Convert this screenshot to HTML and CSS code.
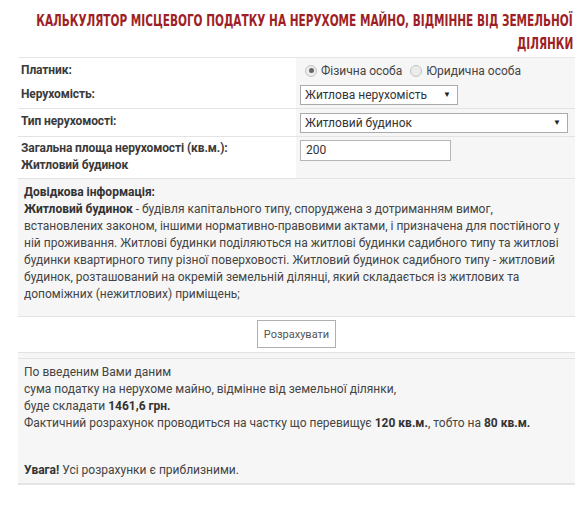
FILE: index.html
```html
<!DOCTYPE html>
<html lang="uk">
<head>
<meta charset="utf-8">
<title>Калькулятор</title>
<link rel="stylesheet" href="styles.css">
</head>
<body>
<div class="wrap">
  <h1 class="title"><span class="tl">КАЛЬКУЛЯТОР МІСЦЕВОГО ПОДАТКУ НА НЕРУХОМЕ МАЙНО, ВІДМІННЕ ВІД ЗЕМЕЛЬНОЇ</span><span class="tl">ДІЛЯНКИ</span></h1>
  <div class="form">
    <div class="row r1">
      <div class="lbl">Платник:</div>
      <div class="val">
        <span class="radio on"></span><span class="rtext">Фізична особа</span>
        <span class="radio"></span><span class="rtext">Юридична особа</span>
      </div>
    </div>
    <div class="row r2">
      <div class="lbl">Нерухомість:</div>
      <div class="val"><div class="sel short">Житлова нерухомість<span class="arr">▼</span></div></div>
    </div>
    <div class="row r3">
      <div class="lbl">Тип нерухомості:</div>
      <div class="val"><div class="sel long">Житловий будинок<span class="arr">▼</span></div></div>
    </div>
    <div class="row r4">
      <div class="lbl">Загальна площа нерухомості (кв.м.):<br>Житловий будинок</div>
      <div class="val"><div class="inp">200</div></div>
    </div>
  </div>
  <div class="info">
    <b>Довідкова інформація:</b><br>
    <b>Житловий будинок</b> - будівля капітального типу, споруджена з дотриманням вимог,<br>
    встановлених законом, іншими нормативно-правовими актами, і призначена для постійного у<br>
    ній проживання. Житлові будинки поділяються на житлові будинки садибного типу та житлові<br>
    будинки квартирного типу різної поверховості. Житловий будинок садибного типу - житловий<br>
    будинок, розташований на окремій земельній ділянці, який складається із житлових та<br>
    допоміжних (нежитлових) приміщень;
  </div>
  <div class="btnrow"><div class="btn">Розрахувати</div></div>
  <div class="spacer"></div>
  <div class="result">
    <div>По введеним Вами даним<br>
    сума податку на нерухоме майно, відмінне від земельної ділянки,<br>
    буде складати <b>1461,6 грн.</b><br>
    Фактичний розрахунок проводиться на частку що перевищує <b>120 кв.м.</b>, тобто на <b>80 кв.м.</b></div>
    <div class="warn"><b>Увага!</b> Усі розрахунки є приблизними.</div>
  </div>
</div>
</body>
</html>
```

FILE: styles.css
```css
html, body {
  margin: 0;
  padding: 0;
  background: #fff;
}
body {
  font-family: Roboto, "Open Sans", "Liberation Sans", sans-serif;
  font-size: 12px;
  color: #444;
}
.wrap {
  margin-left: 18px;
  width: 557px;
}
.title {
  margin: 0;
  padding: 10px 2px 1px 0;
  display: flex;
  flex-direction: column;
  align-items: flex-end;
  font-family: "DejaVu Sans Condensed", "Liberation Sans", sans-serif;
  font-stretch: condensed;
  font-weight: bold;
  font-size: 15px;
  line-height: 23px;
  color: #9f1f26;
}
.tl {
  display: block;
  width: max-content;
  white-space: nowrap;
  transform: scaleX(0.78);
  transform-origin: right center;
}
.form {
  border-top: 1px solid #e6e6e6;
}
.row {
  display: grid;
  grid-template-columns: 278px 1fr;
  border-bottom: 1px solid #e3e3e3;
}
.lbl {
  font-weight: bold;
  color: #3a3a3a;
  padding: 4px 3px;
  line-height: 17px;
  background: #fff;
  letter-spacing: -0.1px;
}
.val {
  background: #f6f6f6;
  padding: 0 4px;
  display: flex;
  align-items: center;
}
.r1 { height: 23px; }
.r2 { height: 26px; }
.r3 { height: 27px; }
.r4 { height: 41px; }
.r4 .lbl { padding-top: 3px; }
.r4 .val { align-items: flex-start; padding-top: 3px; }
.radio {
  display: inline-block;
  width: 10px;
  height: 10px;
  border: 1px solid #c4c4c4;
  border-radius: 50%;
  background: #ececec;
  margin: 0 4px 0 5px;
  position: relative;
  box-sizing: content-box;
}
.radio + .rtext + .radio { margin-left: 8px; }
.radio.on::after {
  content: "";
  position: absolute;
  left: 2.5px;
  top: 2.5px;
  width: 5px;
  height: 5px;
  border-radius: 50%;
  background: #666;
}
.rtext {
  color: #444;
  font-size: 12px;
}
.sel {
  box-sizing: border-box;
  height: 20px;
  border: 1px solid #aaa;
  background: #fff;
  color: #333;
  font-size: 12px;
  line-height: 18px;
  padding: 0 4px;
  display: flex;
  justify-content: space-between;
  align-items: center;
}
.sel.short { width: 158px; }
.sel.long { width: 268px; }
.arr {
  font-size: 8px;
  color: #222;
  padding-right: 2px;
}
.inp {
  box-sizing: border-box;
  width: 151px;
  height: 21px;
  border: 1px solid #b5b5b5;
  background: #fff;
  color: #333;
  font-size: 12px;
  line-height: 19px;
  padding: 0 5px;
}
.info {
  background: #f6f6f6;
  padding: 5px 5px 5px 6px;
  height: 127px;
  line-height: 17px;
  color: #444;
  white-space: nowrap;
  border-bottom: 1px solid #e3e3e3;
}
.info b, .result b {
  color: #333;
}
.btnrow {
  background: #fff;
  display: flex;
  justify-content: center;
  padding: 3px 0 4px;
  border-bottom: 1px solid #e3e3e3;
}
.btn {
  width: 79px;
  height: 28px;
  box-sizing: border-box;
  border: 1px solid #b0b0b0;
  background: #fff;
  color: #555;
  font-size: 11px;
  display: flex;
  align-items: center;
  justify-content: center;
}
.spacer {
  height: 5px;
  background: #f6f6f6;
  border-bottom: 1px solid #e3e3e3;
}
.result {
  background: #f6f6f6;
  padding: 5px 5px 4px 6px;
  line-height: 17px;
  color: #444;
  white-space: nowrap;
  border-bottom: 2px solid #e4e4e4;
}
.warn {
  margin-top: 30px;
}
```
